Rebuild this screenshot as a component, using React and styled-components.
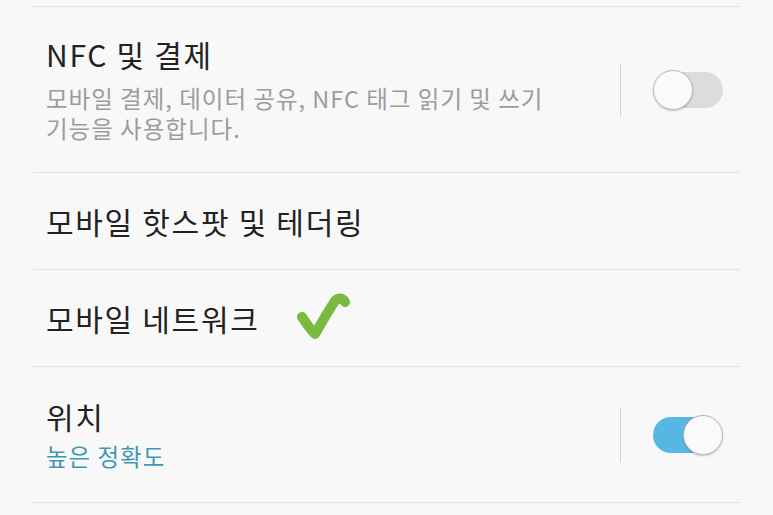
import React from 'react'
import styled, { createGlobalStyle } from 'styled-components'

const GlobalStyle = createGlobalStyle`
    html, body {
        margin: 0;
        padding: 0;
        background: #f8f8f8;
    }
    body {
        font-family: "Noto Sans CJK KR", "Noto Sans", sans-serif;
        -webkit-font-smoothing: antialiased;
    }
`;

const Page = styled.div`
    width: 773px;
    height: 515px;
    overflow: hidden;
    background: #f8f8f8;
    padding-top: 6px;
    box-sizing: border-box;
`;

const List = styled.div`
    margin: 0 33px;
    border-top: 1px solid #e2e2e2;
`;

const Row = styled.div`
    display: flex;
    align-items: center;
    height: ${p => p.h}px;
    padding: 0 17px 0 13px;
    border-bottom: 1px solid #e2e2e2;
    box-sizing: border-box;
`;

const TextBlock = styled.div`
    flex: 1;
    display: flex;
    flex-direction: column;
    gap: ${p => p.gap || 0}px;
`;

const TitleLine = styled.div`
    display: flex;
    align-items: center;
`;

const Title = styled.div`
    font-size: 30px;
    line-height: 36px;
    color: #222;
    letter-spacing: 1.7px;
`;

const Sub = styled.div`
    font-size: 23.5px;
    line-height: 30px;
    color: ${p => (p.accent ? '#4098b6' : '#9c9c9c')};
    letter-spacing: 1px;
    word-break: keep-all;
    max-width: 520px;
`;

const Side = styled.div`
    display: flex;
    align-items: center;
    align-self: center;
`;

const VLine = styled.div`
    width: 1px;
    height: 54px;
    background: #d2d2d2;
    margin-right: 32px;
`;

const Switch = styled.div`
    position: relative;
    width: 70px;
    height: 40px;
`;

const Track = styled.div`
    position: absolute;
    top: 2px;
    left: ${p => (p.on ? 0 : 7)}px;
    width: 63px;
    height: 36px;
    border-radius: 18px;
    background: ${p => (p.on ? '#56b8e2' : '#dcdcdc')};
`;

const Thumb = styled.div`
    position: absolute;
    top: 0;
    left: ${p => (p.on ? 30 : 0)}px;
    width: 38px;
    height: 38px;
    border-radius: 50%;
    background: #fafafa;
    border: 1px solid #b9b9b9;
    box-shadow: 0 1px 2px rgba(0, 0, 0, 0.2);
`;

const Check = styled.svg`
    margin-left: 34px;
    margin-top: -4px;
`;

function Toggle({ on }) {
    return (
        <Side>
            <VLine />
            <Switch>
                <Track on={on} />
                <Thumb on={on} />
            </Switch>
        </Side>
    )
}

export default function App() {
    return (
        <Page>
            <GlobalStyle />
            <List>
                <Row h={166}>
                    <TextBlock gap={11}>
                        <Title>NFC 및 결제</Title>
                        <Sub>모바일 결제, 데이터 공유, NFC 태그 읽기 및 쓰기 기능을 사용합니다.</Sub>
                    </TextBlock>
                    <Toggle on={false} />
                </Row>
                <Row h={97}>
                    <TextBlock>
                        <Title>모바일 핫스팟 및 테더링</Title>
                    </TextBlock>
                </Row>
                <Row h={97}>
                    <TextBlock>
                        <TitleLine>
                            <Title>모바일 네트워크</Title>
                            <Check width="56" height="50" viewBox="0 0 56 50">
                                <path
                                    d="M8 26 C12 32 17 39 21 43 C27 33 34 20 41 10 C44 6 49 7 51 11"
                                    fill="none"
                                    stroke="#7aba3e"
                                    strokeWidth="10"
                                    strokeLinecap="round"
                                    strokeLinejoin="round"
                                />
                            </Check>
                        </TitleLine>
                    </TextBlock>
                </Row>
                <Row h={136}>
                    <TextBlock gap={7}>
                        <Title>위치</Title>
                        <Sub accent>높은 정확도</Sub>
                    </TextBlock>
                    <Toggle on />
                </Row>
            </List>
        </Page>
    )
}
